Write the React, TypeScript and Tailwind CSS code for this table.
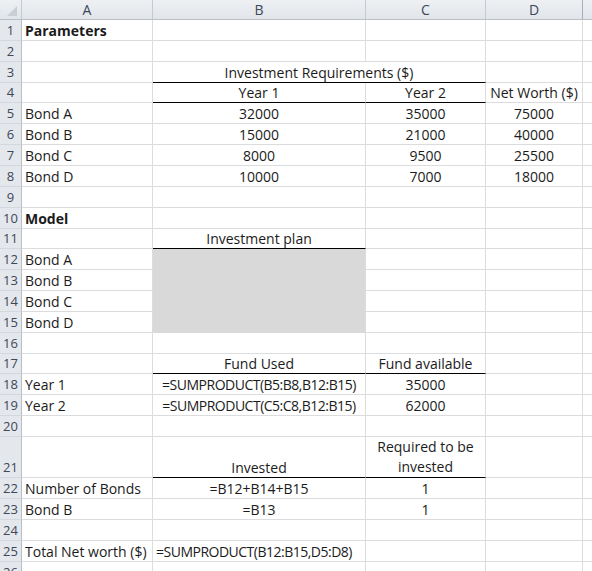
import React from "react";

type Align = "left" | "center";
type CellSpec = {
  t?: string;
  align?: Align;
  bold?: boolean;
  dark?: boolean;
  fill?: boolean;
  formula?: boolean;
  wrap?: string[];
};

type RowSpec = {
  n: number;
  h: string;
  merged?: CellSpec;
  a?: CellSpec;
  b?: CellSpec;
  c?: CellSpec;
  d?: CellSpec;
};

const rows: RowSpec[] = [
  { n: 1, h: "h-[21px]", a: { t: "Parameters", bold: true } },
  { n: 2, h: "h-[21px]" },
  { n: 3, h: "h-[21px]", merged: { t: "Investment Requirements ($)", align: "center", dark: true } },
  {
    n: 4,
    h: "h-[20px]",
    b: { t: "Year 1", align: "center", dark: true },
    c: { t: "Year 2", align: "center", dark: true },
    d: { t: "Net Worth ($)", align: "center" },
  },
  { n: 5, h: "h-[21px]", a: { t: "Bond A" }, b: { t: "32000", align: "center" }, c: { t: "35000", align: "center" }, d: { t: "75000", align: "center" } },
  { n: 6, h: "h-[21px]", a: { t: "Bond B" }, b: { t: "15000", align: "center" }, c: { t: "21000", align: "center" }, d: { t: "40000", align: "center" } },
  { n: 7, h: "h-[21px]", a: { t: "Bond C" }, b: { t: "8000", align: "center" }, c: { t: "9500", align: "center" }, d: { t: "25500", align: "center" } },
  { n: 8, h: "h-[21px]", a: { t: "Bond D" }, b: { t: "10000", align: "center" }, c: { t: "7000", align: "center" }, d: { t: "18000", align: "center" } },
  { n: 9, h: "h-[21px]" },
  { n: 10, h: "h-[21px]", a: { t: "Model", bold: true } },
  { n: 11, h: "h-[20px]", b: { t: "Investment plan", align: "center", dark: true } },
  { n: 12, h: "h-[21px]", a: { t: "Bond A" }, b: { fill: true } },
  { n: 13, h: "h-[21px]", a: { t: "Bond B" }, b: { fill: true } },
  { n: 14, h: "h-[21px]", a: { t: "Bond C" }, b: { fill: true } },
  { n: 15, h: "h-[21px]", a: { t: "Bond D" }, b: { fill: true } },
  { n: 16, h: "h-[21px]" },
  {
    n: 17,
    h: "h-[20px]",
    b: { t: "Fund Used", align: "center", dark: true },
    c: { t: "Fund available", align: "center", dark: true },
  },
  { n: 18, h: "h-[21px]", a: { t: "Year 1" }, b: { t: "=SUMPRODUCT(B5:B8,B12:B15)", align: "center", formula: true }, c: { t: "35000", align: "center" } },
  { n: 19, h: "h-[21px]", a: { t: "Year 2" }, b: { t: "=SUMPRODUCT(C5:C8,B12:B15)", align: "center", formula: true }, c: { t: "62000", align: "center" } },
  { n: 20, h: "h-[21px]" },
  {
    n: 21,
    h: "h-[41px]",
    b: { t: "Invested", align: "center", dark: true },
    c: { wrap: ["Required to be", "invested"], align: "center", dark: true },
  },
  { n: 22, h: "h-[21px]", a: { t: "Number of Bonds" }, b: { t: "=B12+B14+B15", align: "center" }, c: { t: "1", align: "center" } },
  { n: 23, h: "h-[21px]", a: { t: "Bond B" }, b: { t: "=B13", align: "center" }, c: { t: "1", align: "center" } },
  { n: 24, h: "h-[21px]" },
  { n: 25, h: "h-[21px]", a: { t: "Total Net worth ($)" }, b: { t: "=SUMPRODUCT(B12:B15,D5:D8)", formula: true } },
  { n: 26, h: "h-[21px]" },
];

function Cell({ spec, w }: { spec?: CellSpec; w: string }) {
  const s = spec ?? {};
  const bottom = s.dark ? "border-b-black" : s.fill ? "border-b-[#d9d9d9]" : "border-b-[#dadcdd]";
  const bg = s.fill ? "bg-[#d9d9d9]" : "bg-white";
  const justify = s.align === "center" ? "justify-center text-center" : "justify-start pl-[3px]";
  return (
    <div
      className={`${w} h-full shrink-0 flex items-end ${justify} ${bg} border-r border-b border-r-[#dadcdd] ${bottom} relative`}
    >
      {s.wrap ? (
        <div className="flex flex-col items-center leading-[20px]">
          {s.wrap.map((l) => (
            <span key={l} className="whitespace-nowrap">
              {l}
            </span>
          ))}
        </div>
      ) : s.t ? (
        <span
          className={`whitespace-nowrap leading-[19px] ${s.bold ? "font-bold" : ""} ${
            s.formula ? "tracking-[-0.5px]" : ""
          } ${s.formula && s.align !== "center" ? "absolute left-[3px] bottom-0" : ""}`}
        >
          {s.t}
        </span>
      ) : null}
    </div>
  );
}

function HeaderCell({ label, w, extra }: { label: string; w: string; extra?: string }) {
  return (
    <div
      className={`${w} h-full shrink-0 flex items-center justify-center border-r ${
        extra ?? "border-r-[#c5cad1]"
      } leading-[19px] text-[#3c4858]`}
    >
      {label}
    </div>
  );
}

export default function App() {
  return (
    <div
      className="w-[592px] h-[571px] overflow-hidden bg-white text-[14px] text-[#1b1b1b]"
      style={{ fontFamily: '"Open Sans", "Noto Sans", sans-serif' }}
    >
      {/* column headers */}
      <div className="flex h-[20px] bg-gradient-to-b from-[#eef0f3] to-[#e1e5ea] border-b border-b-[#b8bec7]">
        <div className="w-[22px] h-full shrink-0 border-r border-r-[#c5cad1] relative">
          <svg className="absolute right-[4px] bottom-[3px]" width="10" height="10" viewBox="0 0 10 10">
            <polygon points="10,0 10,10 0,10" fill="#c9ced5" />
          </svg>
        </div>
        <HeaderCell label="A" w="w-[131px]" />
        <HeaderCell label="B" w="w-[213px]" />
        <HeaderCell label="C" w="w-[120px]" />
        <HeaderCell label="D" w="w-[97px]" extra="border-r-[#a9b0ba]" />
        <div className="flex-1" />
      </div>
      {rows.map((r) => (
        <div key={r.n} className={`flex ${r.h}`}>
          <div className="w-[22px] h-full shrink-0 flex items-end justify-center bg-[#e4e7ec] border-r border-b border-r-[#b8bec7] border-b-[#d3d8de] text-[13px] leading-[19px] text-[#3c4858]">
            {r.n}
          </div>
          <Cell spec={r.a} w="w-[131px]" />
          {r.merged ? (
            <Cell spec={r.merged} w="w-[333px]" />
          ) : (
            <>
              <Cell spec={r.b} w="w-[213px]" />
              <Cell spec={r.c} w="w-[120px]" />
            </>
          )}
          <Cell spec={r.d} w="w-[97px]" />
          <div className="flex-1 h-full border-b border-b-[#dadcdd]" />
        </div>
      ))}
    </div>
  );
}
